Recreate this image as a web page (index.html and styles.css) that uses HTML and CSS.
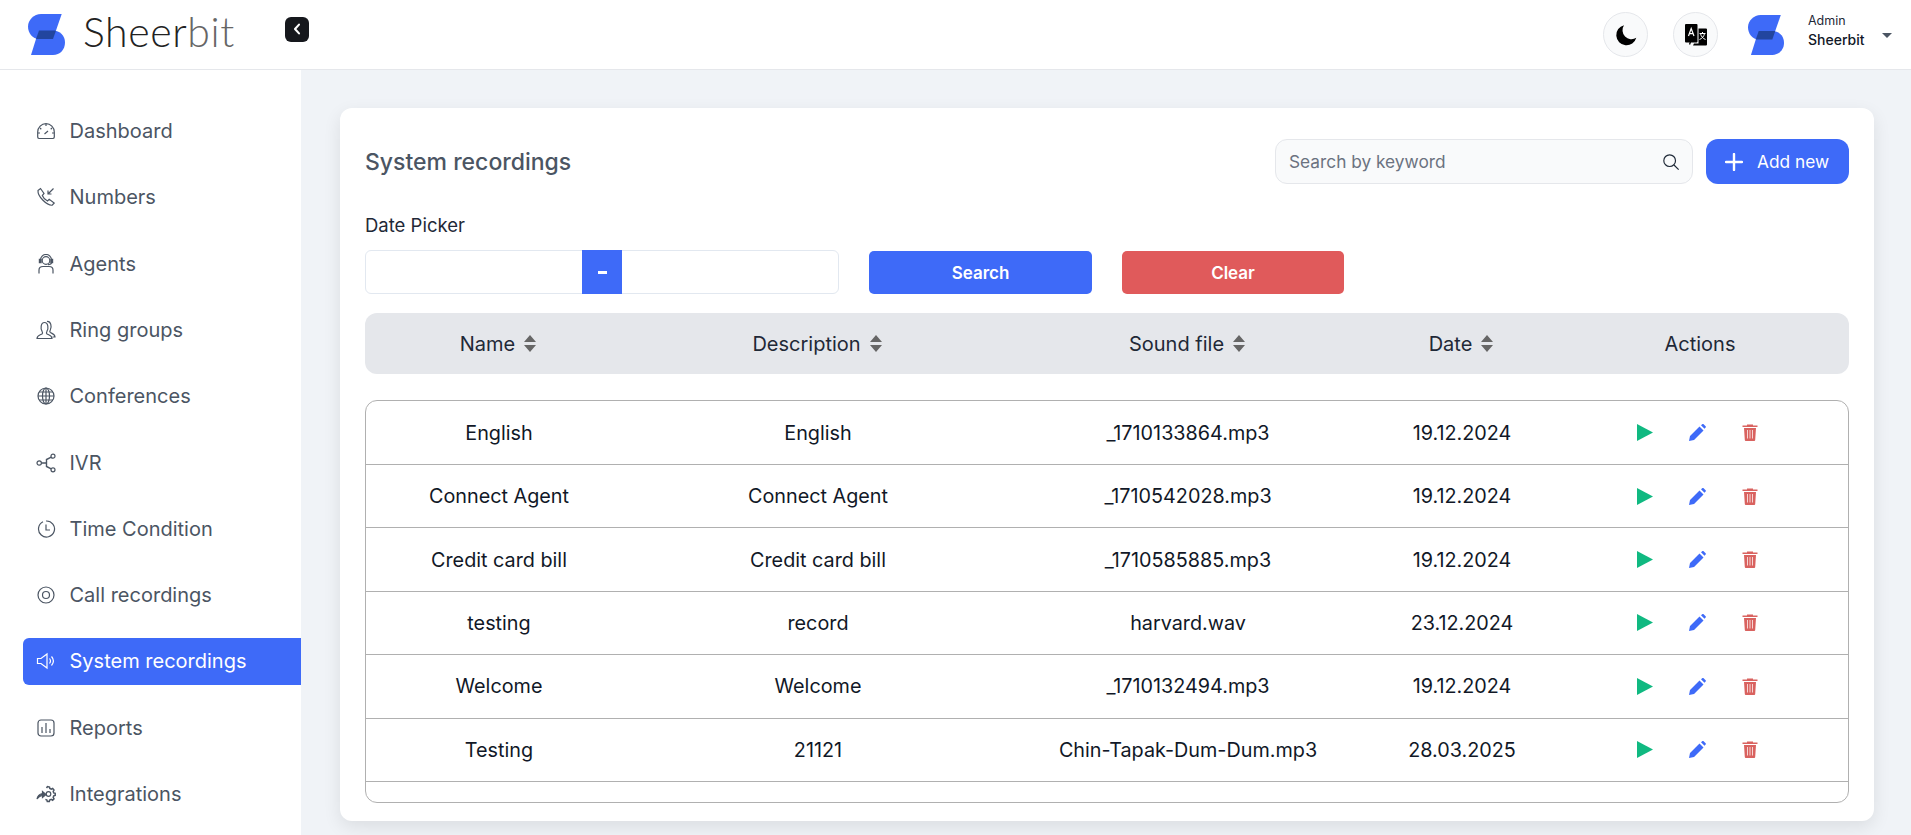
FILE: index.html
```html
<!DOCTYPE html>
<html lang="en">
<head>
  <meta charset="UTF-8" />
  <meta name="viewport" content="width=device-width, initial-scale=1.0" />
  <title>System recordings</title>
  <link rel="stylesheet" href="styles.css">
</head>
<body>
  <!-- Top bar -->
  <header class="topbar">
    <div class="brand">
      <svg class="logo" viewBox="0 0 37 41"><path fill="#3e6af8" d="M33.700 0H13C6 0 0 6 0 12.500S4.500 25 11 25L28 16.500z"/><path fill="#3e6af8" d="M11 16.500H25C32 16.500 37 21.500 37 28.500S32 41 25 41H3L8 25z"/><path fill="#22459f" d="M11 16.500H28L25 25H8z"/></svg>
      <span class="brand-name">Sheer<span class="brand-thin">bit</span></span>
    </div>
    <button class="collapse-btn" type="button">
      <svg viewBox="0 0 10 14" width="8" height="12"><path d="M7.5 1.5 2.5 7l5 5.500" fill="none" stroke="#fff" stroke-width="2.600" stroke-linecap="round" stroke-linejoin="round"/></svg>
    </button>
    <div class="topbar-right">
      <button class="round-btn" type="button">
        <svg viewBox="0 0 24 24" width="24" height="24"><path fill="#000" d="M10 2.200A10.200 10.200 0 1 0 22.300 14.800 9 9 0 0 1 10 2.200z"/></svg>
      </button>
      <button class="round-btn" type="button">
        <svg viewBox="0 0 24 24" width="24" height="24"><path fill="#000" d="M2 1h10.500a1 1 0 0 1 1 1v16.500a1 1 0 0 1-1 1H7l-1 2.500-1-1 .6-1.500H2a1 1 0 0 1-1-1V2a1 1 0 0 1 1-1z"/><path fill="#000" d="M14.500 5.500H22a1 1 0 0 1 1 1v15a1 1 0 0 1-1 1H9l1-2h4.500z"/><path d="M4.500 13 7.200 5.500 10 13M5.500 10.700h3.500" fill="none" stroke="#fff" stroke-width="1.200"/><path d="M15.500 10.500h6M18.500 9v1.500M20.500 10.500c-.5 3-2.500 5-5 6M16.500 10.500c.5 3 2.500 5 5 6" fill="none" stroke="#fff" stroke-width="1"/></svg>
      </button>
      <svg class="logo user-logo" viewBox="0 0 37 41"><path fill="#3e6af8" d="M33.700 0H13C6 0 0 6 0 12.500S4.500 25 11 25L28 16.500z"/><path fill="#3e6af8" d="M11 16.500H25C32 16.500 37 21.500 37 28.500S32 41 25 41H3L8 25z"/><path fill="#22459f" d="M11 16.500H28L25 25H8z"/></svg>
      <div class="user">
        <span class="user-role">Admin</span>
        <span class="user-name">Sheerbit</span>
      </div>
      <span class="caret"></span>
    </div>
  </header>

  <div class="layout">
    <!-- Sidebar -->
    <nav class="sidebar">
      <a class="nav-item">
        <svg class="nav-icon" viewBox="0 0 20 20"><path d="M3 17.500h14a1.500 1.500 0 0 0 1.300-1.500V11A8.300 8.300 0 0 0 1.700 11v5A1.500 1.500 0 0 0 3 17.500z"/><path d="M10 3v2M4 7l1.300 1.200M16 7l-1.300 1.200M2 12h2M16 12h2M8.500 13l3.500-3"/></svg>
        <span>Dashboard</span>
      </a>
      <a class="nav-item">
        <svg class="nav-icon" viewBox="0 0 20 20"><path d="M2 3.500 4.500 1.500 8 6.500 6.300 8.500c.8 2 3 4.500 5.200 5.500l1.700-1.700 5 3.700-2 2.200C11 18.700 1.500 9.500 2 3.500z"/><path d="M17.500 1.500 12 7M12 3.500V7h3.500"/></svg>
        <span>Numbers</span>
      </a>
      <a class="nav-item">
        <svg class="nav-icon" viewBox="0 0 20 20"><circle cx="10" cy="6.500" r="3.800"/><path d="M4.500 8V6a5.500 5.500 0 0 1 11 0v2"/><path d="M3.500 5.500h1.500v3H3.500zM15 5.500h1.500v3H15z" stroke-width="1.400"/><path d="M15.500 8.500c0 1.500-1.500 2.200-3.500 2.200M3 19.500V16c0-2 1.500-3.500 4-3.500h6c2.500 0 4 1.500 4 3.500v3.500"/></svg>
        <span>Agents</span>
      </a>
      <a class="nav-item">
        <svg class="nav-icon" viewBox="0 0 20 20"><path d="M1 18.500c0-3 3-3.500 5-4.500.8-.7.5-2 0-2.800C4.500 9 4.500 2.500 8.500 2.500s4 6.500 2.500 8.700c-.5.800-.8 2.100 0 2.800 2 1 5 1.500 5 4.500z"/><path d="M11 1.500c4-.5 5 5.500 3.300 8.500-.5.800-.6 2 0 2.500 1.700 1 4.700 1.500 4.700 4.500h-2.500"/></svg>
        <span>Ring groups</span>
      </a>
      <a class="nav-item">
        <svg class="nav-icon" viewBox="0 0 20 20"><circle cx="10" cy="10" r="8"/><ellipse cx="10" cy="10" rx="3.500" ry="8"/><path d="M10 2v16M2 10h16M3 6h14M3 14h14"/></svg>
        <span>Conferences</span>
      </a>
      <a class="nav-item">
        <svg class="nav-icon" viewBox="0 0 20 20"><circle cx="3.200" cy="10" r="2.200"/><circle cx="17" cy="3.200" r="2"/><circle cx="17" cy="16.800" r="2"/><path d="M5.500 10h5M15.200 4.200 10.500 6.500v7l4.700 2.300" stroke-width="1.400"/></svg>
        <span>IVR</span>
      </a>
      <a class="nav-item">
        <svg class="nav-icon" viewBox="0 0 20 20"><path d="M7 2.800A8 8 0 1 0 10 2"/><path d="M10 5.500V11h4"/></svg>
        <span>Time Condition</span>
      </a>
      <a class="nav-item">
        <svg class="nav-icon" viewBox="0 0 20 20"><circle cx="10" cy="10" r="8"/><circle cx="10" cy="10" r="3.500"/></svg>
        <span>Call recordings</span>
      </a>
      <a class="nav-item active">
        <svg class="nav-icon" viewBox="0 0 20 20"><path d="M1.500 7.500H5L11 3v14l-6-4.500H1.500z"/><path d="M13.500 7.500c1.200 1.500 1.200 3.500 0 5M15.500 5.500c2.300 2.700 2.300 6.300 0 9"/></svg>
        <span>System recordings</span>
      </a>
      <a class="nav-item">
        <svg class="nav-icon" viewBox="0 0 20 20"><rect x="2" y="2" width="16" height="16" rx="3"/><path d="M6 9v6M10 5v10M14 11v4"/></svg>
        <span>Reports</span>
      </a>
      <a class="nav-item">
        <svg class="nav-icon" viewBox="0 0 20 20"><path d="M10.500 4l1-1.500 2 .5.300 1.500 1.500.7 1.400-.7 1.300 1.500-.8 1.400.5 1.600 1.500.4v2l-1.500.5-.5 1.500.8 1.400-1.400 1.400-1.400-.8-1.500.6-.4 1.500h-2l-.4-1.500-1.500-.6" stroke-width="1.500"/><circle cx="12.500" cy="10" r="2.300"/><path fill="#4b5563" d="M1 15c.5-3 2.500-5 5.500-5.500V7.500L10 10.500 6.500 13.500v-2C4.500 11.700 2.500 13 1 15z"/></svg>
        <span>Integrations</span>
      </a>
    </nav>

    <!-- Main content -->
    <main class="content">
      <section class="card">
        <div class="card-head">
          <h1 class="card-title">System recordings</h1>
          <div class="card-tools">
            <div class="search-box">
              <input class="search-input" type="text" placeholder="Search by keyword">
              <svg viewBox="0 0 20 20" width="18" height="18"><circle cx="8.500" cy="8.500" r="6.500" fill="none" stroke="#1f2937" stroke-width="1.300"/><path d="m13.300 13.300 5.200 5.200" stroke="#1f2937" stroke-width="1.300"/></svg>
            </div>
            <button class="add-btn" type="button">
              <svg viewBox="0 0 18 18" width="18" height="18"><path d="M9 1v16M1 9h16" stroke="#fff" stroke-width="2.400" stroke-linecap="round"/></svg>
              Add new
            </button>
          </div>
        </div>

        <label class="date-label">Date Picker</label>
        <div class="filters">
          <div class="date-range">
            <input class="date-input" type="text">
            <span class="date-sep"><i></i></span>
            <input class="date-input" type="text">
          </div>
          <button class="btn btn-blue" type="button">Search</button>
          <button class="btn btn-red" type="button">Clear</button>
        </div>

        <div class="table-head">
          <div class="th">Name <svg class="sort" viewBox="0 0 12 17"><path d="M6 0l6 7H0zM6 17l6-7H0z"/></svg></div>
          <div class="th">Description <svg class="sort" viewBox="0 0 12 17"><path d="M6 0l6 7H0zM6 17l6-7H0z"/></svg></div>
          <div class="th">Sound file <svg class="sort" viewBox="0 0 12 17"><path d="M6 0l6 7H0zM6 17l6-7H0z"/></svg></div>
          <div class="th">Date <svg class="sort" viewBox="0 0 12 17"><path d="M6 0l6 7H0zM6 17l6-7H0z"/></svg></div>
          <div class="th th-actions">Actions</div>
        </div>

        <div class="table-box" id="rows"></div>
      </section>
    </main>
  </div>

  <script>
    // Table rows
    const recordings = [
      ['English', 'English', '_1710133864.mp3', '19.12.2024'],
      ['Connect Agent', 'Connect Agent', '_1710542028.mp3', '19.12.2024'],
      ['Credit card bill', 'Credit card bill', '_1710585885.mp3', '19.12.2024'],
      ['testing', 'record', 'harvard.wav', '23.12.2024'],
      ['Welcome', 'Welcome', '_1710132494.mp3', '19.12.2024'],
      ['Testing', '21121', 'Chin-Tapak-Dum-Dum.mp3', '28.03.2025']
    ];

    const actions = `
      <div class="actions">
        <svg viewBox="0 0 16 17" width="16" height="17"><path fill="#10b981" d="M0 0l16 8.500L0 17z"/></svg>
        <svg viewBox="0 0 17 17" width="17" height="17"><path fill="#3e6af8" d="M10.500 2.500l4 4L5 16l-5 1 1-5zM12 1.200l1.200-1c.5-.3 1-.3 1.400 0l2 2c.4.400.4 1 0 1.400l-1.100 1.200z"/></svg>
        <svg viewBox="0 0 16 17" width="16" height="17"><path fill="#d9625f" d="M5 1.500V.5h6v1h4.500V3H.5V1.500zM2 4h12l-.8 12a1 1 0 0 1-1 1H3.800a1 1 0 0 1-1-1z"/><path d="M5.500 6v8.500M8 6v8.500M10.500 6v8.500" stroke="#f6d5d4" stroke-width="1"/></svg>
      </div>`;

    const rows = document.getElementById('rows');
    recordings.forEach(rec => {
      const row = document.createElement('div');
      row.className = 'table-row';
      row.innerHTML = rec.map(cell => `<div class="td">${cell}</div>`).join('') + actions;
      rows.appendChild(row);
    });
  </script>
</body>
</html>
```

FILE: styles.css
```css
* {
  box-sizing: border-box;
}
body {
  margin: 0;
  height: 835px;
  overflow: hidden;
  font-family: Inter, "Noto Sans", sans-serif;
  background-color: #f0f3f7;
  color: #111827;
}
button,
input {
  font-family: inherit;
}

/* Top bar */
.topbar {
  display: flex;
  align-items: center;
  height: 70px;
  padding: 0 19px 0 28px;
  background-color: #fff;
  border-bottom: 1px solid #e5e7eb;
}
.brand {
  display: flex;
  align-items: center;
  gap: 18px;
  width: 257px;
}
.logo {
  width: 37px;
  height: 41px;
}
.brand-name {
  margin-top: -6px;
  font-family: Lato, sans-serif;
  font-weight: 300;
  font-size: 41px;
  letter-spacing: 0.6px;
  color: #222;
}
.brand-thin {
  color: #666;
}
.collapse-btn {
  display: flex;
  align-items: center;
  justify-content: center;
  width: 24px;
  height: 25px;
  padding: 0;
  margin-top: -11px;
  border: 0;
  border-radius: 6px;
  background-color: #16181d;
}
.topbar-right {
  display: flex;
  align-items: center;
  margin-left: auto;
}
.round-btn {
  display: flex;
  align-items: center;
  justify-content: center;
  width: 45px;
  height: 45px;
  padding: 0;
  margin-right: 25px;
  border: 1px solid #e5e7eb;
  border-radius: 50%;
  background-color: #f9fafb;
}
.user-logo {
  width: 36px;
  height: 40px;
  margin: 0 24px 0 5px;
}
.user {
  display: flex;
  flex-direction: column;
  width: 74px;
  margin-top: -8px;
}
.user-role {
  font-size: 12.500px;
  line-height: 18px;
  color: #1f2937;
}
.user-name {
  font-size: 14px;
  font-weight: 500;
  line-height: 20px;
}
.caret {
  width: 0;
  height: 0;
  margin-top: 1px;
  border-left: 5px solid transparent;
  border-right: 5px solid transparent;
  border-top: 5px solid #4b5563;
}

/* Sidebar + content */
.layout {
  display: flex;
  height: 765px;
}
.sidebar {
  display: flex;
  flex-direction: column;
  gap: 19.300px;
  flex: 0 0 301px;
  padding: 37.600px 0 0 23px;
  background-color: #fff;
}
.nav-item {
  display: flex;
  align-items: center;
  gap: 13.500px;
  height: 47px;
  flex: none;
  padding-left: 13px;
  border-radius: 6px 0 0 6px;
  font-size: 20px;
  color: #4b5563;
}
.nav-item.active {
  background-color: #3e6af8;
  color: #fff;
}
.nav-icon {
  width: 20px;
  height: 20px;
  fill: none;
  stroke: #4b5563;
  stroke-width: 1.200;
}
.active .nav-icon {
  stroke: #fff;
}

.content {
  flex: 1;
  padding: 38px 37px 0 39px;
}
.card {
  height: 713px;
  padding: 31px 25px 17px;
  border-radius: 12px;
  background-color: #fff;
  box-shadow: 0 6px 18px rgba(0, 0, 0, 0.09);
}
.card-head {
  display: flex;
  align-items: center;
  justify-content: space-between;
  height: 45px;
  margin-bottom: 30px;
}
.card-title {
  margin: 0;
  font-size: 23px;
  font-weight: 500;
  color: #4b5563;
}
.card-tools {
  display: flex;
  gap: 13px;
}
.search-box {
  display: flex;
  align-items: center;
  width: 418px;
  height: 45px;
  padding: 0 12px 0 13px;
  border: 1px solid #e5e7eb;
  border-radius: 12px;
  background-color: #f9fafb;
}
.search-input {
  flex: 1;
  border: 0;
  outline: 0;
  padding: 0;
  font-size: 17.300px;
  background: transparent;
}
.search-input::placeholder {
  color: #6b7280;
}
.add-btn {
  display: flex;
  align-items: center;
  gap: 14px;
  width: 143px;
  height: 45px;
  padding: 0 0 0 19px;
  border: 0;
  border-radius: 12px;
  font-size: 17.300px;
  color: #fff;
  background-color: #3e6af8;
}

/* Date filter */
.date-label {
  display: block;
  height: 22px;
  margin-bottom: 14px;
  font-size: 18.500px;
  line-height: 22px;
  color: #1f2937;
}
.filters {
  display: flex;
  gap: 30px;
  height: 44px;
  margin-bottom: 19px;
}
.date-range {
  display: flex;
  width: 474px;
  border: 1px solid #e2e8f0;
  border-radius: 6px;
}
.date-input {
  flex: 1;
  min-width: 0;
  border: 0;
  outline: 0;
  background: transparent;
}
.date-sep {
  display: flex;
  align-items: center;
  justify-content: center;
  width: 40px;
  margin: -1px 0;
  background-color: #3e6af8;
}
.date-sep i {
  width: 9px;
  height: 3px;
  background-color: #fff;
}
.btn {
  width: 223px;
  height: 43px;
  align-self: flex-end;
  border: 0;
  border-radius: 5px;
  font-size: 17px;
  font-weight: 600;
  color: #fff;
}
.btn-blue {
  background-color: #3e6af8;
}
.btn-red {
  width: 222px;
  background-color: #e05a5b;
}

/* Table */
.table-head,
.table-row {
  display: grid;
  grid-template-columns: 266px 372px 368px 180px 290px;
  align-items: center;
}
.table-head {
  height: 61px;
  margin-bottom: 26px;
  border-radius: 12px;
  background-color: #e5e7eb;
}
.th {
  display: flex;
  align-items: center;
  justify-content: center;
  gap: 9px;
  font-size: 20px;
  color: #1f2937;
}
.th-actions {
  padding-left: 8px;
}
.sort {
  width: 12px;
  height: 17px;
  fill: #666;
}
.table-box {
  height: 403px;
  padding-top: 0.600px;
  overflow: hidden;
  border: 1px solid #b0b0b0;
  border-radius: 12px;
  background-color: #fff;
}
.table-row {
  height: 63.400px;
  border-bottom: 1px solid #b0b0b0;
}
.td {
  font-size: 19.800px;
  text-align: center;
}
.actions {
  display: flex;
  align-items: center;
  justify-content: center;
  gap: 36px;
}
```
